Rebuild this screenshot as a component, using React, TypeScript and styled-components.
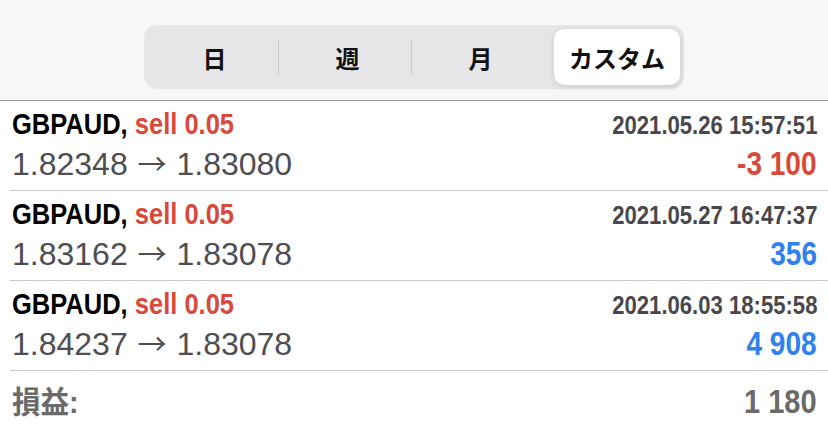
import * as React from "react";
import styled, { createGlobalStyle } from "styled-components";

const GlobalStyle = createGlobalStyle`
  html, body {
    margin: 0;
    padding: 0;
    background: #ffffff;
  }
  body {
    width: 828px;
    height: 428px;
    overflow: hidden;
    font-family: "Liberation Sans", "Noto Sans CJK JP", sans-serif;
  }
`;

const Page = styled.div`
  width: 828px;
  height: 428px;
  display: flex;
  flex-direction: column;
  background: #fff;
`;

const Header = styled.div`
  height: 100px;
  flex-shrink: 0;
  background: #f7f7f7;
  border-bottom: 1px solid #9c9c9c;
  display: flex;
  align-items: center;
  justify-content: center;
`;

const Segmented = styled.div`
  display: grid;
  grid-template-columns: repeat(4, 1fr);
  width: 540px;
  height: 64px;
  margin-top: 14px;
  padding: 4px;
  box-sizing: border-box;
  background: #e6e6e8;
  border-radius: 13px;
`;

const Segment = styled.div<{ $active?: boolean; $divider?: boolean }>`
  position: relative;
  display: flex;
  align-items: center;
  justify-content: center;
  margin-left: ${(p) => (p.$active ? "7px" : "0")};
  font-family: "Noto Sans CJK JP", sans-serif;
  font-weight: 700;
  font-size: 24px;
  color: #111;
  border-radius: 10px;
  background: ${(p) => (p.$active ? "#ffffff" : "transparent")};
  box-shadow: ${(p) =>
    p.$active ? "0 2px 6px rgba(0,0,0,0.12), 0 0 1px rgba(0,0,0,0.08)" : "none"};

  &::after {
    content: "";
    display: ${(p) => (p.$divider ? "block" : "none")};
    position: absolute;
    right: 2px;
    top: 11px;
    bottom: 11px;
    width: 1px;
    background: #c9c9cc;
  }
`;

const Row = styled.div`
  margin-left: 10px;
  padding: 6px 11px 7px 2px;
  height: 76px;
  border-bottom: 1px solid #c8c8c8;
  display: flex;
  flex-direction: column;
  justify-content: space-between;
`;

const Line = styled.div`
  display: flex;
  justify-content: space-between;
  align-items: baseline;
`;

// condensed bold text (no narrow face installed, so squeeze it)
const Condensed = styled.span<{ $right?: boolean; $scale?: number }>`
  display: inline-block;
  white-space: nowrap;
  transform: scaleX(${(p) => p.$scale ?? 0.85});
  transform-origin: ${(p) => (p.$right ? "right" : "left")} center;
`;

const Title = styled.div`
  font-family: "Liberation Sans", sans-serif;
  font-weight: 700;
  font-size: 30px;
  line-height: 34px;
  color: #000;
`;

const Sell = styled.span`
  color: #d8493a;
`;

const DateText = styled.div`
  font-family: "Liberation Sans", sans-serif;
  font-weight: 700;
  font-size: 26px;
  line-height: 34px;
  color: #48484c;
`;

const Prices = styled.div`
  font-family: "Liberation Sans", sans-serif;
  font-size: 32px;
  line-height: 38px;
  color: #4e4e52;
`;

const Arrow = styled.span`
  font-family: "Noto Sans CJK JP", sans-serif;
  font-weight: 400;
  font-size: 29px;
  margin: 0 1px;
`;

const Profit = styled.div<{ $negative?: boolean }>`
  font-family: "Liberation Sans", sans-serif;
  font-weight: 700;
  font-size: 33px;
  line-height: 38px;
  color: ${(p) => (p.$negative ? "#d8493a" : "#2f80f0")};
`;

const Total = styled.div`
  margin-left: 10px;
  padding: 12px 11px 0 2px;
  display: flex;
  justify-content: space-between;
  align-items: baseline;
  font-family: "Liberation Sans", "Noto Sans CJK JP", sans-serif;
  font-weight: 700;
  color: #6a6a6a;
`;

const TotalLabel = styled.div`
  font-size: 31px;
  line-height: 38px;
`;

const TotalValue = styled.div`
  font-size: 33px;
  line-height: 38px;
`;

interface Deal {
  symbol: string;
  side: string;
  open: string;
  close: string;
  time: string;
  profit: string;
}

const deals: Deal[] = [
  { symbol: "GBPAUD", side: "sell 0.05", open: "1.82348", close: "1.83080", time: "2021.05.26 15:57:51", profit: "-3 100" },
  { symbol: "GBPAUD", side: "sell 0.05", open: "1.83162", close: "1.83078", time: "2021.05.27 16:47:37", profit: "356" },
  { symbol: "GBPAUD", side: "sell 0.05", open: "1.84237", close: "1.83078", time: "2021.06.03 18:55:58", profit: "4 908" },
];

const periods = ["日", "週", "月", "カスタム"];

export default function App() {
  const active = 3;
  return (
    <>
      <GlobalStyle />
      <Page>
        <Header>
          <Segmented>
            {periods.map((p, i) => (
              <Segment
                key={p}
                $active={i === active}
                $divider={i < periods.length - 1 && i !== active && i + 1 !== active}
              >
                {p}
              </Segment>
            ))}
          </Segmented>
        </Header>
        {deals.map((d) => (
          <Row key={d.time}>
            <Line>
              <Title>
                <Condensed>
                  {d.symbol}, <Sell>{d.side}</Sell>
                </Condensed>
              </Title>
              <DateText>
                <Condensed $right>{d.time}</Condensed>
              </DateText>
            </Line>
            <Line>
              <Prices>
                {d.open} <Arrow>→</Arrow> {d.close}
              </Prices>
              <Profit $negative={d.profit.startsWith("-")}>
                <Condensed $right>{d.profit}</Condensed>
              </Profit>
            </Line>
          </Row>
        ))}
        <Total>
          <TotalLabel>
            <Condensed $scale={0.92}>損益:</Condensed>
          </TotalLabel>
          <TotalValue>
            <Condensed $right $scale={0.88}>1 180</Condensed>
          </TotalValue>
        </Total>
      </Page>
    </>
  );
}
